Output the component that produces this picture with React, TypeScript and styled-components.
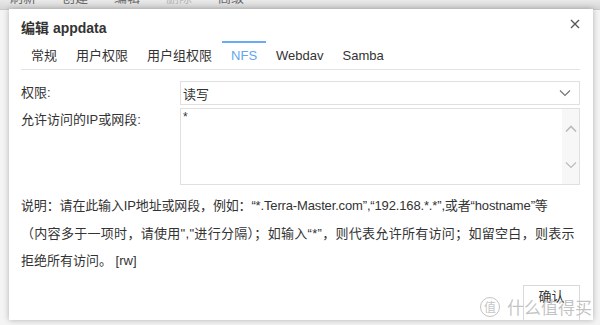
import React from 'react';
import styled, { createGlobalStyle } from 'styled-components';

const GlobalStyle = createGlobalStyle`
  html, body {
    margin: 0;
    padding: 0;
    width: 600px;
    height: 325px;
    overflow: hidden;
    background: #f3f3f3;
    font-family: "Liberation Sans", "Noto Sans CJK SC", sans-serif;
  }
`;

const Page = styled.div`
  position: relative;
  width: 600px;
  height: 325px;
  overflow: hidden;
  background: #f4f4f4;
`;

const Toolbar = styled.div`
  display: flex;
  gap: 26px;
  height: 9px;
  padding-left: 10px;
  overflow: hidden;
  background: linear-gradient(#e9e9e9, #d6d6d6);
  border-bottom: 1px solid #c9c9c9;
`;

const ToolItem = styled.span<{ $disabled?: boolean }>`
  font-size: 13px;
  line-height: 14px;
  margin-top: -9px;
  color: ${(p) => (p.$disabled ? '#b5b5b5' : '#666')};
`;

const Modal = styled.div`
  position: absolute;
  left: 9px;
  top: 9px;
  width: 584px;
  height: 311px;
  background: #fff;
  box-shadow: 0 0 6px rgba(0, 0, 0, 0.28);
  box-sizing: border-box;
  padding: 0 12px;
  overflow: hidden;
  color: #333;
`;

const Header = styled.div`
  display: flex;
  align-items: center;
  justify-content: space-between;
  height: 32px;
  padding-right: 1px;
`;

const Title = styled.div`
  font-size: 14px;
  font-weight: bold;
  color: #333;
  padding-top: 4px;
`;

const Close = styled.svg`
  width: 10px;
  height: 10px;
  margin-bottom: 2px;
`;

const Tabs = styled.div`
  display: flex;
  margin-right: 1px;
  padding-left: 1px;
  border-bottom: 1px solid #e3e3e3;
`;

const Tab = styled.div<{ $active?: boolean }>`
  padding: 0 9px;
  height: 26px;
  line-height: 26px;
  font-size: 13px;
  color: ${(p) => (p.$active ? '#62a6ef' : '#333')};
  border-top: 2px solid ${(p) => (p.$active ? '#6aabf3' : 'transparent')};
  margin-right: 1px;
`;

const Form = styled.div`
  display: grid;
  grid-template-columns: 159px 1fr;
  row-gap: 3px;
  margin-top: 11px;
  margin-right: 1px;
`;

const Label = styled.div`
  font-size: 13px;
  line-height: 24px;
  color: #333;
`;

const Select = styled.div`
  display: flex;
  align-items: center;
  justify-content: space-between;
  height: 24px;
  box-sizing: border-box;
  border: 1px solid #e0e0e0;
  padding: 0 8px 0 2px;
  font-size: 13px;
`;

const Chevron = styled.svg`
  width: 12px;
  height: 8px;
`;

const TextBox = styled.div`
  display: flex;
  height: 77px;
  box-sizing: border-box;
  border: 1px solid #e0e0e0;
`;

const TextValue = styled.div`
  flex: 1;
  font-size: 12px;
  line-height: 12px;
  padding: 2px;
`;

const ScrollTrack = styled.div`
  width: 17px;
  background: #f7f7f7;
  display: flex;
  flex-direction: column;
  align-items: center;
  justify-content: space-between;
  padding: 16px 0 15px;
`;

const Note = styled.div`
  margin-top: 7px;
  font-size: 13px;
  line-height: 27.5px;
  color: #333;
`;

const NoteLine = styled.div<{ $spacing?: number }>`
  white-space: nowrap;
  letter-spacing: ${(p) => p.$spacing ?? 0}px;
`;

const Footer = styled.div`
  display: flex;
  justify-content: flex-end;
  margin-top: 10px;
  margin-right: 1px;
`;

const Button = styled.div`
  width: 57px;
  height: 38px;
  box-sizing: border-box;
  border: 1px solid #d9d9d9;
  font-size: 13px;
  text-align: center;
  line-height: 22px;
  color: #333;
  background: #fff;
`;

const Watermark = styled.div`
  position: absolute;
  left: 480px;
  top: 297px;
  display: flex;
  align-items: center;
  gap: 7px;
  font-family: "Noto Sans CJK SC", sans-serif;
  font-size: 17px;
  line-height: 20px;
  color: rgba(185, 185, 185, 0.85);
  pointer-events: none;
`;

const Badge = styled.span`
  width: 18px;
  height: 18px;
  border: 1.5px solid rgba(185, 185, 185, 0.85);
  border-radius: 50%;
  font-size: 12px;
  line-height: 18px;
  text-align: center;
`;

const Down = ({ color = '#777' }: { color?: string }) => (
  <Chevron viewBox="0 0 12 8">
    <path d="M1 1.5 L6 6.5 L11 1.5" fill="none" stroke={color} strokeWidth="1.2" />
  </Chevron>
);

const Up = ({ color = '#bbb' }: { color?: string }) => (
  <Chevron viewBox="0 0 12 8">
    <path d="M1 6.5 L6 1.5 L11 6.5" fill="none" stroke={color} strokeWidth="1.6" />
  </Chevron>
);

const tabs = ['常规', '用户权限', '用户组权限', 'NFS', 'Webdav', 'Samba'];

export default function App() {
  return (
    <Page>
      <GlobalStyle />
      <Toolbar>
        <ToolItem>刷新</ToolItem>
        <ToolItem>创建</ToolItem>
        <ToolItem>编辑</ToolItem>
        <ToolItem $disabled>删除</ToolItem>
        <ToolItem>高级</ToolItem>
      </Toolbar>
      <Modal>
        <Header>
          <Title>编辑 appdata</Title>
          <Close viewBox="0 0 10 10">
            <path d="M1 1 L9 9 M9 1 L1 9" stroke="#555" strokeWidth="1.3" />
          </Close>
        </Header>
        <Tabs>
          {tabs.map((t) => (
            <Tab key={t} $active={t === 'NFS'}>
              {t}
            </Tab>
          ))}
        </Tabs>
        <Form>
          <Label>权限:</Label>
          <Select>
            <span>读写</span>
            <Down />
          </Select>
          <Label>允许访问的IP或网段:</Label>
          <TextBox>
            <TextValue>*</TextValue>
            <ScrollTrack>
              <Up />
              <Down color="#bbb" />
            </ScrollTrack>
          </TextBox>
        </Form>
        <Note>
          <NoteLine $spacing={-0.15}>说明：请在此输入IP地址或网段，例如：“*.Terra-Master.com”,“192.168.*.*”,或者“hostname”等</NoteLine>
          <NoteLine $spacing={0.3}>（内容多于一项时，请使用","进行分隔）；如输入“*”，则代表允许所有访问；如留空白，则表示</NoteLine>
          <NoteLine>拒绝所有访问。 [rw]</NoteLine>
        </Note>
        <Footer>
          <Button>确认</Button>
        </Footer>
      </Modal>
      <Watermark>
        <Badge>值</Badge>
        <span>什么值得买</span>
      </Watermark>
    </Page>
  );
}
